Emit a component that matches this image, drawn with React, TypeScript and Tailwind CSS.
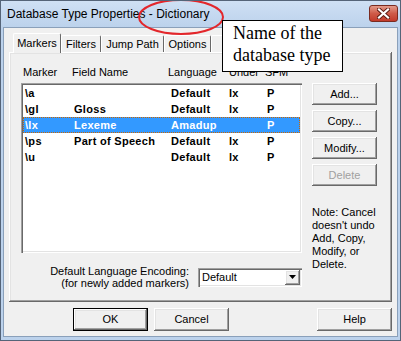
import React from 'react';

const rows = [
    { id: 1, marker: "\\a", field: "", lang: "Default", under: "lx", sfm: "P" },
    { id: 2, marker: "\\gl", field: "Gloss", lang: "Default", under: "lx", sfm: "P" },
    { id: 3, marker: "\\lx", field: "Lexeme", lang: "Amadup", under: "", sfm: "P", selected: true },
    { id: 4, marker: "\\ps", field: "Part of Speech", lang: "Default", under: "lx", sfm: "P" },
    { id: 5, marker: "\\u", field: "", lang: "Default", under: "lx", sfm: "P" },
];

const tabs = [
    { id: 1, name: "Markers", w: "w-[48px]" },
    { id: 2, name: "Filters", w: "w-[40px]" },
    { id: 3, name: "Jump Path", w: "w-[63px]" },
    { id: 4, name: "Options", w: "w-[47px]" },
    { id: 5, name: "", w: "w-[52px]" },
];

const raised = "shadow-[inset_-1px_-1px_0_#696969,inset_1px_1px_0_#ffffff,inset_-2px_-2px_0_#a0a0a0,inset_2px_2px_0_#e3e3e3]";
const sunken = "shadow-[inset_1px_1px_0_#a0a0a0,inset_2px_2px_0_#696969,inset_-1px_-1px_0_#ffffff,inset_-2px_-2px_0_#e3e3e3]";

const Btn = ({ label, disabled, className = "" }: { label: string; disabled?: boolean; className?: string }) => (
    <div className={`flex items-center justify-center bg-[#f0f0f0] text-[11px] ${raised} ${disabled ? 'text-[#a0a0a0]' : 'text-black'} ${className}`}>
        {label}
    </div>
);

const App = () => {
    return (
        <div className='relative w-[401px] h-[341px] overflow-hidden border border-[#556478] bg-[#bcd2ec] flex flex-col font-["Liberation_Sans",Arial,sans-serif]'>
            {/* title bar */}
            <div className='h-[26px] shrink-0 flex items-start pl-[6px] pr-[2px] bg-gradient-to-b from-[#cfe0f4] to-[#bcd2ec]'>
                <span className='mt-[6px] text-[12px] text-black leading-[14px]'>Database Type Properties - Dictionary</span>
                <div className='ml-auto mt-[4px] w-[29px] h-[17px] rounded-[3px] border border-[#7a2b20] bg-gradient-to-b from-[#e29a8a] via-[#cf5b48] to-[#c23a2a] flex items-center justify-center'>
                    <svg width="13" height="11" viewBox="0 0 13 11">
                        <path d="M2 1.5 L11 9.5 M11 1.5 L2 9.5" stroke="#5a1a12" strokeWidth="4" strokeLinecap="square" />
                        <path d="M2 1.5 L11 9.5 M11 1.5 L2 9.5" stroke="#ffffff" strokeWidth="2.2" strokeLinecap="square" />
                    </svg>
                </div>
            </div>

            {/* client */}
            <div className='flex-1 mx-[2px] mb-[3px] border border-[#8aa0ba] bg-[#f0f0f0] flex flex-col px-[5px]'>
                {/* tabs */}
                <div className='flex items-end h-[24px] pl-[4px]'>
                    {tabs.map(tab => (
                        tab.id === 1
                            ? <div key={tab.id} className={`relative z-10 -mb-px h-[20px] ${tab.w} bg-[#f0f0f0] border-l border-t border-white border-r border-r-[#696969] rounded-t-[2px] flex items-center justify-center text-[11px] text-black pb-[1px]`}>{tab.name}</div>
                            : <div key={tab.id} className={`h-[17px] ${tab.w} bg-[#f0f0f0] border-l border-t border-white border-r border-r-[#696969] rounded-t-[2px] flex items-center justify-center text-[11px] text-black`}>{tab.name}</div>
                    ))}
                </div>

                {/* panel */}
                <div className={`h-[250px] flex ${raised}`}>
                    <div className='pl-[12px] pt-[12px] flex flex-col'>
                        <div className='relative h-[19px] w-[281px] text-[11px] text-black'>
                            <span className='absolute left-[2px] top-0'>Marker</span>
                            <span className='absolute left-[51px] top-0'>Field Name</span>
                            <span className='absolute left-[147px] top-0'>Language</span>
                            <span className='absolute left-[208px] top-0'>Under</span>
                            <span className='absolute left-[244px] top-0'>SFM</span>
                        </div>
                        <div className={`w-[281px] h-[170px] bg-white p-[2px] ${sunken}`}>
                            {rows.map(row => (
                                <div key={row.id} className={`flex h-[16px] items-center text-[11px] font-bold tracking-[0.3px] ${row.selected ? 'bg-[#3399ff] text-white border border-dotted border-[#cc6600]' : 'text-black border border-transparent'}`}>
                                    <span className='w-[50px] pl-[1px]'>{row.marker}</span>
                                    <span className='w-[97px]'>{row.field}</span>
                                    <span className='w-[58px]'>{row.lang}</span>
                                    <span className='w-[38px]'>{row.under}</span>
                                    <span>{row.sfm}</span>
                                </div>
                            ))}
                        </div>
                        <div className='mt-[12px] flex items-center justify-end w-[281px]'>
                            <div className='text-right text-[11px] leading-[12px] text-black'>
                                <div>Default Language Encoding:</div>
                                <div>(for newly added markers)</div>
                            </div>
                            <div className={`ml-[9px] w-[104px] h-[19px] bg-white flex items-center p-[2px] ${sunken}`}>
                                <span className='flex-1 pl-[2px] text-[11px] text-black'>Default</span>
                                <div className={`w-[15px] h-[15px] bg-[#f0f0f0] flex items-center justify-center ${raised}`}>
                                    <svg width="7" height="4" viewBox="0 0 7 4"><path d="M0 0 H7 L3.5 4 Z" fill="#000" /></svg>
                                </div>
                            </div>
                        </div>
                    </div>
                    <div className='ml-[10px] pt-[31px] flex flex-col'>
                        <div className='flex flex-col gap-[5px]'>
                            <Btn label="Add..." className='w-[65px] h-[22px]' />
                            <Btn label="Copy..." className='w-[65px] h-[22px]' />
                            <Btn label="Modify..." className='w-[65px] h-[22px]' />
                            <Btn label="Delete" disabled className='w-[65px] h-[22px]' />
                        </div>
                        <div className='mt-[20px] text-[11px] leading-[13px] text-black'>
                            <div>Note: Cancel</div>
                            <div>doesn't undo</div>
                            <div>Add, Copy,</div>
                            <div>Modify, or</div>
                            <div>Delete.</div>
                        </div>
                    </div>
                </div>

                {/* bottom buttons */}
                <div className='flex mt-[6px]'>
                    <div className='ml-[64px] border border-black'>
                        <Btn label="OK" className='w-[73px] h-[21px]' />
                    </div>
                    <Btn label="Cancel" className='ml-[6px] w-[75px] h-[23px]' />
                    <Btn label="Help" className='ml-auto w-[75px] h-[23px]' />
                </div>
            </div>

            {/* annotation */}
            <svg className='absolute left-[136px] top-[-3px]' width="88" height="40" viewBox="0 0 88 40">
                <ellipse cx="44" cy="19" rx="42" ry="17" fill="none" stroke="#e3262b" strokeWidth="2" />
            </svg>
            <div className='absolute left-[221px] top-[19px] w-[121px] h-[52px] bg-white border border-black pl-[10px] pt-[1px] font-["Liberation_Serif","Times_New_Roman",serif] text-[18px] leading-[22px] text-black'>
                <div>Name of the</div>
                <div>database type</div>
            </div>
        </div>
    );
};

export default App;
